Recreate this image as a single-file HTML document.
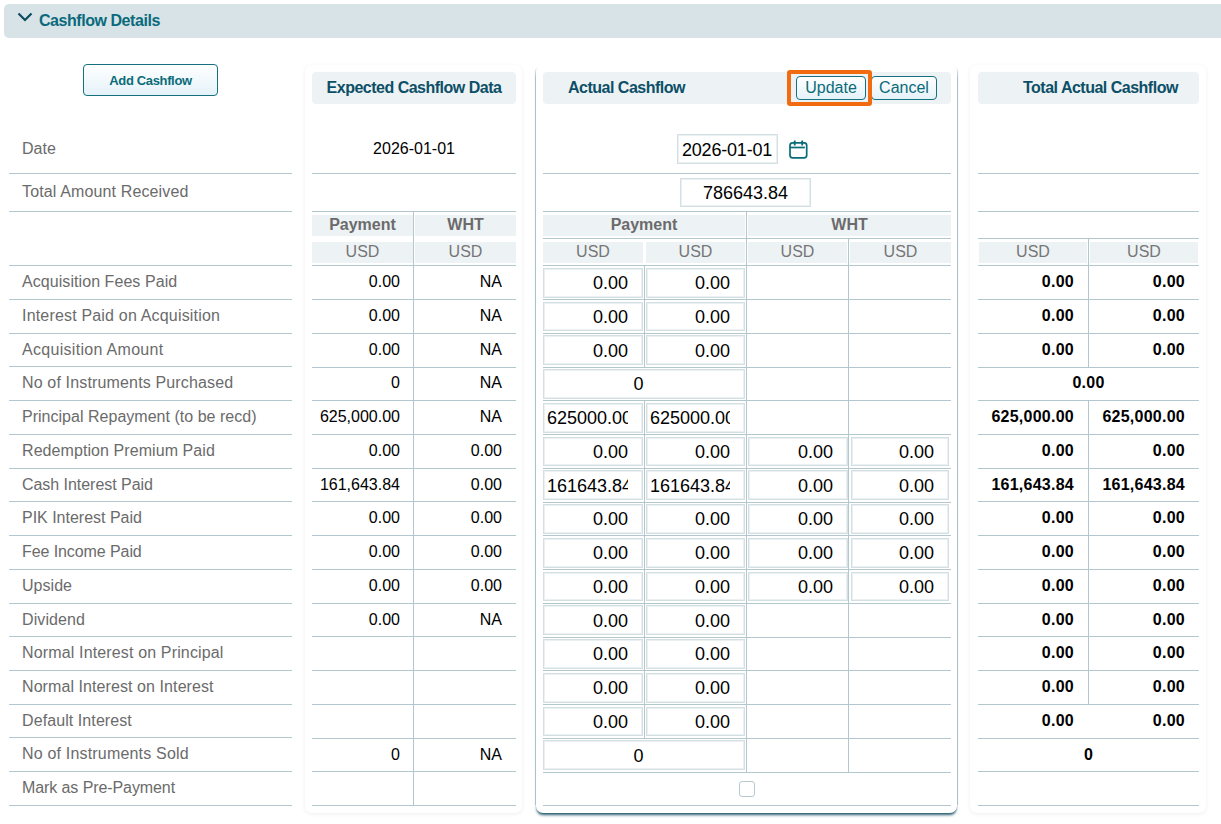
<!DOCTYPE html>
<html><head><meta charset="utf-8"><style>
html,body{margin:0;padding:0;background:#fff;width:1221px;height:824px;overflow:hidden}
#r{position:relative;width:1221px;height:824px;overflow:hidden}
#r div{position:absolute;box-sizing:border-box}
</style></head><body><div id="r">
<div style="left:4px;top:4px;width:1217px;height:34px;background:#d8e3e8;border-radius:5px 0 0 5px"></div>
<svg style="position:absolute;left:17px;top:12px" width="16" height="11" viewBox="0 0 16 11"><path d="M1.5 1.5 L8 8 L14.5 1.5" fill="none" stroke="#0b4d5e" stroke-width="2.2"/></svg>
<div style="left:39px;top:10px;width:200px;height:22px;font:bold 16px/22px 'Liberation Sans',sans-serif;color:#0a6a7b;letter-spacing:-0.45px;white-space:nowrap">Cashflow Details</div>
<div style="left:83px;top:64px;width:135px;height:32px;border:1px solid #16707e;border-radius:4px;background:linear-gradient(#ffffff,#e4f2f9);font:bold 13px/32px 'Liberation Sans',sans-serif;color:#0b6b79;text-align:center;letter-spacing:-0.35px;white-space:nowrap">Add Cashflow</div>
<div style="left:305px;top:65px;width:217px;height:748px;background:#fff;border-radius:7px;box-shadow:0 1px 4px rgba(0,0,0,0.07)"></div>
<div style="left:536px;top:64px;width:421px;height:749px;background:#fff;border-radius:7px;box-shadow:0 3px 3px -1px #2a5f72, 0 1px 1px 0 #a9bdc5"></div>
<div style="left:535px;top:68px;width:1px;height:737px;background:linear-gradient(rgba(169,191,200,0),#aec2ca 10px)"></div>
<div style="left:957px;top:68px;width:1px;height:737px;background:linear-gradient(rgba(169,191,200,0),#aec2ca 10px)"></div>
<div style="left:970px;top:65px;width:236px;height:748px;background:#fff;border-radius:7px;box-shadow:0 1px 4px rgba(0,0,0,0.07)"></div>
<div style="left:312px;top:72px;width:204px;height:32px;background:#edf2f5;border-radius:4px;font:bold 16px/32px 'Liberation Sans',sans-serif;color:#0c4f66;letter-spacing:-0.5px;white-space:nowrap;text-align:center">Expected Cashflow Data</div>
<div style="left:543px;top:72px;width:408px;height:32px;background:#edf2f5;border-radius:4px;font:bold 16px/32px 'Liberation Sans',sans-serif;color:#0c4f66;letter-spacing:-0.5px;white-space:nowrap"></div>
<div style="left:568px;top:72px;width:200px;height:32px;font:bold 16px/32px 'Liberation Sans',sans-serif;color:#0c4f66;letter-spacing:-0.5px;white-space:nowrap">Actual Cashflow</div>
<div style="left:978px;top:72px;width:221px;height:32px;background:#edf2f5;border-radius:4px"></div>
<div style="left:1023px;top:72px;width:175px;height:32px;font:bold 16px/32px 'Liberation Sans',sans-serif;color:#0c4f66;letter-spacing:-0.5px;white-space:nowrap">Total Actual Cashflow</div>
<div style="left:871px;top:76px;width:66px;height:24px;border:1px solid #16707e;border-radius:4px;background:linear-gradient(#ffffff,#e4f2f9);font:16px/22px 'Liberation Sans',sans-serif;color:#0b6b79;text-align:center;white-space:nowrap">Cancel</div>
<div style="left:787px;top:70px;width:85px;height:36px;border:4px solid #f26b10;border-radius:3px"></div>
<div style="left:796px;top:76px;width:70px;height:24px;border:1px solid #16707e;border-radius:4px;background:linear-gradient(#ffffff,#e4f2f9);font:16px/22px 'Liberation Sans',sans-serif;color:#0b6b79;text-align:center;white-space:nowrap">Update</div>
<div style="left:22px;top:139px;width:270px;height:20px;font:16px/20px 'Liberation Sans',sans-serif;color:#6b6b6b;white-space:nowrap;letter-spacing:0px">Date</div>
<div style="left:9px;top:173px;width:283px;height:1px;background:#b3c7cf"></div>
<div style="left:22px;top:182px;width:270px;height:20px;font:16px/20px 'Liberation Sans',sans-serif;color:#6b6b6b;white-space:nowrap;letter-spacing:0.135px">Total Amount Received</div>
<div style="left:9px;top:211px;width:283px;height:1px;background:#b3c7cf"></div>
<div style="left:9px;top:265px;width:283px;height:1px;background:#b3c7cf"></div>
<div style="left:22px;top:272px;width:270px;height:20px;font:16px/20px 'Liberation Sans',sans-serif;color:#6b6b6b;white-space:nowrap;letter-spacing:0.065px">Acquisition Fees Paid</div>
<div style="left:9px;top:299px;width:283px;height:1px;background:#b3c7cf"></div>
<div style="left:22px;top:306px;width:270px;height:20px;font:16px/20px 'Liberation Sans',sans-serif;color:#6b6b6b;white-space:nowrap;letter-spacing:0.181px">Interest Paid on Acquisition</div>
<div style="left:9px;top:333px;width:283px;height:1px;background:#b3c7cf"></div>
<div style="left:22px;top:340px;width:270px;height:20px;font:16px/20px 'Liberation Sans',sans-serif;color:#6b6b6b;white-space:nowrap;letter-spacing:0.3px">Acquisition Amount</div>
<div style="left:9px;top:366px;width:283px;height:1px;background:#b3c7cf"></div>
<div style="left:22px;top:373px;width:270px;height:20px;font:16px/20px 'Liberation Sans',sans-serif;color:#6b6b6b;white-space:nowrap;letter-spacing:0.154px">No of Instruments Purchased</div>
<div style="left:9px;top:400px;width:283px;height:1px;background:#b3c7cf"></div>
<div style="left:22px;top:407px;width:270px;height:20px;font:16px/20px 'Liberation Sans',sans-serif;color:#6b6b6b;white-space:nowrap;letter-spacing:0.019px">Principal Repayment (to be recd)</div>
<div style="left:9px;top:434px;width:283px;height:1px;background:#b3c7cf"></div>
<div style="left:22px;top:441px;width:270px;height:20px;font:16px/20px 'Liberation Sans',sans-serif;color:#6b6b6b;white-space:nowrap;letter-spacing:0.073px">Redemption Premium Paid</div>
<div style="left:9px;top:468px;width:283px;height:1px;background:#b3c7cf"></div>
<div style="left:22px;top:475px;width:270px;height:20px;font:16px/20px 'Liberation Sans',sans-serif;color:#6b6b6b;white-space:nowrap;letter-spacing:-0.041px">Cash Interest Paid</div>
<div style="left:9px;top:501px;width:283px;height:1px;background:#b3c7cf"></div>
<div style="left:22px;top:508px;width:270px;height:20px;font:16px/20px 'Liberation Sans',sans-serif;color:#6b6b6b;white-space:nowrap;letter-spacing:-0.012px">PIK Interest Paid</div>
<div style="left:9px;top:535px;width:283px;height:1px;background:#b3c7cf"></div>
<div style="left:22px;top:542px;width:270px;height:20px;font:16px/20px 'Liberation Sans',sans-serif;color:#6b6b6b;white-space:nowrap;letter-spacing:-0.086px">Fee Income Paid</div>
<div style="left:9px;top:569px;width:283px;height:1px;background:#b3c7cf"></div>
<div style="left:22px;top:576px;width:270px;height:20px;font:16px/20px 'Liberation Sans',sans-serif;color:#6b6b6b;white-space:nowrap;letter-spacing:0.04px">Upside</div>
<div style="left:9px;top:603px;width:283px;height:1px;background:#b3c7cf"></div>
<div style="left:22px;top:610px;width:270px;height:20px;font:16px/20px 'Liberation Sans',sans-serif;color:#6b6b6b;white-space:nowrap;letter-spacing:0.1px">Dividend</div>
<div style="left:9px;top:636px;width:283px;height:1px;background:#b3c7cf"></div>
<div style="left:22px;top:643px;width:270px;height:20px;font:16px/20px 'Liberation Sans',sans-serif;color:#6b6b6b;white-space:nowrap;letter-spacing:0.148px">Normal Interest on Principal</div>
<div style="left:9px;top:670px;width:283px;height:1px;background:#b3c7cf"></div>
<div style="left:22px;top:677px;width:270px;height:20px;font:16px/20px 'Liberation Sans',sans-serif;color:#6b6b6b;white-space:nowrap;letter-spacing:0.081px">Normal Interest on Interest</div>
<div style="left:9px;top:704px;width:283px;height:1px;background:#b3c7cf"></div>
<div style="left:22px;top:711px;width:270px;height:20px;font:16px/20px 'Liberation Sans',sans-serif;color:#6b6b6b;white-space:nowrap;letter-spacing:0.087px">Default Interest</div>
<div style="left:9px;top:737px;width:283px;height:1px;background:#b3c7cf"></div>
<div style="left:22px;top:744px;width:270px;height:20px;font:16px/20px 'Liberation Sans',sans-serif;color:#6b6b6b;white-space:nowrap;letter-spacing:0.186px">No of Instruments Sold</div>
<div style="left:9px;top:771px;width:283px;height:1px;background:#b3c7cf"></div>
<div style="left:22px;top:778px;width:270px;height:20px;font:16px/20px 'Liberation Sans',sans-serif;color:#6b6b6b;white-space:nowrap;letter-spacing:-0.089px">Mark as Pre-Payment</div>
<div style="left:9px;top:805px;width:283px;height:1px;background:#b3c7cf"></div>
<div style="left:312px;top:139px;width:204px;height:20px;font:16px/20px 'Liberation Sans',sans-serif;color:#000;white-space:nowrap;text-align:center">2026-01-01</div>
<div style="left:312px;top:173px;width:204px;height:1px;background:#b3c7cf"></div>
<div style="left:312px;top:211px;width:204px;height:1px;background:#b3c7cf"></div>
<div style="left:312px;top:265px;width:204px;height:1px;background:#b3c7cf"></div>
<div style="left:413px;top:211px;width:1px;height:595px;background:#b3c7cf"></div>
<div style="left:312px;top:215px;width:101px;height:21px;background:#edf2f5;font:bold 16px/19px 'Liberation Sans',sans-serif;color:#6b6b6b;text-align:center;white-space:nowrap">Payment</div>
<div style="left:415px;top:215px;width:101px;height:21px;background:#edf2f5;font:bold 16px/19px 'Liberation Sans',sans-serif;color:#6b6b6b;text-align:center;white-space:nowrap">WHT</div>
<div style="left:312px;top:242px;width:101px;height:21px;background:#edf2f5;font:16px/19px 'Liberation Sans',sans-serif;color:#767676;text-align:center;white-space:nowrap">USD</div>
<div style="left:415px;top:242px;width:101px;height:21px;background:#edf2f5;font:16px/19px 'Liberation Sans',sans-serif;color:#767676;text-align:center;white-space:nowrap">USD</div>
<div style="left:313px;top:272px;width:87px;height:20px;font:16px/20px 'Liberation Sans',sans-serif;color:#000;white-space:nowrap;text-align:right">0.00</div>
<div style="left:414px;top:272px;width:88px;height:20px;font:16px/20px 'Liberation Sans',sans-serif;color:#000;white-space:nowrap;text-align:right">NA</div>
<div style="left:312px;top:299px;width:204px;height:1px;background:#b3c7cf"></div>
<div style="left:313px;top:306px;width:87px;height:20px;font:16px/20px 'Liberation Sans',sans-serif;color:#000;white-space:nowrap;text-align:right">0.00</div>
<div style="left:414px;top:306px;width:88px;height:20px;font:16px/20px 'Liberation Sans',sans-serif;color:#000;white-space:nowrap;text-align:right">NA</div>
<div style="left:312px;top:333px;width:204px;height:1px;background:#b3c7cf"></div>
<div style="left:313px;top:340px;width:87px;height:20px;font:16px/20px 'Liberation Sans',sans-serif;color:#000;white-space:nowrap;text-align:right">0.00</div>
<div style="left:414px;top:340px;width:88px;height:20px;font:16px/20px 'Liberation Sans',sans-serif;color:#000;white-space:nowrap;text-align:right">NA</div>
<div style="left:312px;top:367px;width:204px;height:1px;background:#b3c7cf"></div>
<div style="left:313px;top:373px;width:87px;height:20px;font:16px/20px 'Liberation Sans',sans-serif;color:#000;white-space:nowrap;text-align:right">0</div>
<div style="left:414px;top:373px;width:88px;height:20px;font:16px/20px 'Liberation Sans',sans-serif;color:#000;white-space:nowrap;text-align:right">NA</div>
<div style="left:312px;top:400px;width:204px;height:1px;background:#b3c7cf"></div>
<div style="left:313px;top:407px;width:87px;height:20px;font:16px/20px 'Liberation Sans',sans-serif;color:#000;white-space:nowrap;text-align:right">625,000.00</div>
<div style="left:414px;top:407px;width:88px;height:20px;font:16px/20px 'Liberation Sans',sans-serif;color:#000;white-space:nowrap;text-align:right">NA</div>
<div style="left:312px;top:434px;width:204px;height:1px;background:#b3c7cf"></div>
<div style="left:313px;top:441px;width:87px;height:20px;font:16px/20px 'Liberation Sans',sans-serif;color:#000;white-space:nowrap;text-align:right">0.00</div>
<div style="left:414px;top:441px;width:88px;height:20px;font:16px/20px 'Liberation Sans',sans-serif;color:#000;white-space:nowrap;text-align:right">0.00</div>
<div style="left:312px;top:468px;width:204px;height:1px;background:#b3c7cf"></div>
<div style="left:313px;top:475px;width:87px;height:20px;font:16px/20px 'Liberation Sans',sans-serif;color:#000;white-space:nowrap;text-align:right">161,643.84</div>
<div style="left:414px;top:475px;width:88px;height:20px;font:16px/20px 'Liberation Sans',sans-serif;color:#000;white-space:nowrap;text-align:right">0.00</div>
<div style="left:312px;top:501px;width:204px;height:1px;background:#b3c7cf"></div>
<div style="left:313px;top:508px;width:87px;height:20px;font:16px/20px 'Liberation Sans',sans-serif;color:#000;white-space:nowrap;text-align:right">0.00</div>
<div style="left:414px;top:508px;width:88px;height:20px;font:16px/20px 'Liberation Sans',sans-serif;color:#000;white-space:nowrap;text-align:right">0.00</div>
<div style="left:312px;top:535px;width:204px;height:1px;background:#b3c7cf"></div>
<div style="left:313px;top:542px;width:87px;height:20px;font:16px/20px 'Liberation Sans',sans-serif;color:#000;white-space:nowrap;text-align:right">0.00</div>
<div style="left:414px;top:542px;width:88px;height:20px;font:16px/20px 'Liberation Sans',sans-serif;color:#000;white-space:nowrap;text-align:right">0.00</div>
<div style="left:312px;top:569px;width:204px;height:1px;background:#b3c7cf"></div>
<div style="left:313px;top:576px;width:87px;height:20px;font:16px/20px 'Liberation Sans',sans-serif;color:#000;white-space:nowrap;text-align:right">0.00</div>
<div style="left:414px;top:576px;width:88px;height:20px;font:16px/20px 'Liberation Sans',sans-serif;color:#000;white-space:nowrap;text-align:right">0.00</div>
<div style="left:312px;top:603px;width:204px;height:1px;background:#b3c7cf"></div>
<div style="left:313px;top:610px;width:87px;height:20px;font:16px/20px 'Liberation Sans',sans-serif;color:#000;white-space:nowrap;text-align:right">0.00</div>
<div style="left:414px;top:610px;width:88px;height:20px;font:16px/20px 'Liberation Sans',sans-serif;color:#000;white-space:nowrap;text-align:right">NA</div>
<div style="left:312px;top:636px;width:204px;height:1px;background:#b3c7cf"></div>
<div style="left:312px;top:670px;width:204px;height:1px;background:#b3c7cf"></div>
<div style="left:312px;top:704px;width:204px;height:1px;background:#b3c7cf"></div>
<div style="left:312px;top:738px;width:204px;height:1px;background:#b3c7cf"></div>
<div style="left:313px;top:745px;width:87px;height:20px;font:16px/20px 'Liberation Sans',sans-serif;color:#000;white-space:nowrap;text-align:right">0</div>
<div style="left:414px;top:745px;width:88px;height:20px;font:16px/20px 'Liberation Sans',sans-serif;color:#000;white-space:nowrap;text-align:right">NA</div>
<div style="left:312px;top:771px;width:204px;height:1px;background:#b3c7cf"></div>
<div style="left:312px;top:805px;width:204px;height:1px;background:#b3c7cf"></div>
<div style="left:677px;top:134px;width:101px;height:30px;border:1px solid #d3dfe3;box-shadow:inset 0 0 0 1px #ebf1f3;background:#fff"></div>
<div style="left:682px;top:140px;width:95px;height:20px;font:18px/20px 'Liberation Sans',sans-serif;color:#000;white-space:nowrap;letter-spacing:-0.2px;overflow:hidden;text-align:left">2026-01-01</div>
<svg style="position:absolute;left:789px;top:140px" width="19" height="19" viewBox="0 0 19 19"><rect x="1" y="2.9" width="16.7" height="14.9" rx="2.6" fill="none" stroke="#086b78" stroke-width="1.7"/><line x1="1" y1="7.5" x2="15.9" y2="7.5" stroke="#086b78" stroke-width="1.7"/><line x1="5.7" y1="0.5" x2="5.7" y2="5.5" stroke="#086b78" stroke-width="1.8"/><line x1="13.2" y1="0.5" x2="13.2" y2="5.5" stroke="#086b78" stroke-width="1.8"/></svg>
<div style="left:543px;top:173px;width:408px;height:1px;background:#b3c7cf"></div>
<div style="left:680px;top:178px;width:131px;height:29px;border:1px solid #d3dfe3;box-shadow:inset 0 0 0 1px #ebf1f3;background:#fff"></div>
<div style="left:681px;top:183px;width:129px;height:20px;font:18px/20px 'Liberation Sans',sans-serif;color:#000;white-space:nowrap;overflow:hidden;text-align:center">786643.84</div>
<div style="left:543px;top:211px;width:408px;height:1px;background:#b3c7cf"></div>
<div style="left:543px;top:238px;width:408px;height:1px;background:#b3c7cf"></div>
<div style="left:543px;top:265px;width:408px;height:1px;background:#b3c7cf"></div>
<div style="left:746px;top:211px;width:1px;height:562px;background:#b3c7cf"></div>
<div style="left:848px;top:238px;width:1px;height:535px;background:#b3c7cf"></div>
<div style="left:543px;top:215px;width:202px;height:21px;background:#edf2f5;font:bold 16px/19px 'Liberation Sans',sans-serif;color:#6b6b6b;text-align:center;white-space:nowrap">Payment</div>
<div style="left:748px;top:215px;width:203px;height:21px;background:#edf2f5;font:bold 16px/19px 'Liberation Sans',sans-serif;color:#6b6b6b;text-align:center;white-space:nowrap">WHT</div>
<div style="left:543px;top:242px;width:100px;height:21px;background:#edf2f5;font:16px/19px 'Liberation Sans',sans-serif;color:#767676;text-align:center;white-space:nowrap">USD</div>
<div style="left:646px;top:242px;width:99px;height:21px;background:#edf2f5;font:16px/19px 'Liberation Sans',sans-serif;color:#767676;text-align:center;white-space:nowrap">USD</div>
<div style="left:748px;top:242px;width:99px;height:21px;background:#edf2f5;font:16px/19px 'Liberation Sans',sans-serif;color:#767676;text-align:center;white-space:nowrap">USD</div>
<div style="left:850px;top:242px;width:101px;height:21px;background:#edf2f5;font:16px/19px 'Liberation Sans',sans-serif;color:#767676;text-align:center;white-space:nowrap">USD</div>
<div style="left:644px;top:265px;width:1px;height:35px;background:#b3c7cf"></div>
<div style="left:543px;top:268px;width:100px;height:30px;border:1px solid #d3dfe3;box-shadow:inset 0 0 0 1px #ebf1f3;background:#fff"></div>
<div style="left:547px;top:273px;width:81px;height:20px;font:18px/20px 'Liberation Sans',sans-serif;color:#000;white-space:nowrap;overflow:hidden;text-align:right">0.00</div>
<div style="left:646px;top:268px;width:99px;height:30px;border:1px solid #d3dfe3;box-shadow:inset 0 0 0 1px #ebf1f3;background:#fff"></div>
<div style="left:650px;top:273px;width:80px;height:20px;font:18px/20px 'Liberation Sans',sans-serif;color:#000;white-space:nowrap;overflow:hidden;text-align:right">0.00</div>
<div style="left:543px;top:299px;width:408px;height:1px;background:#b3c7cf"></div>
<div style="left:644px;top:299px;width:1px;height:35px;background:#b3c7cf"></div>
<div style="left:543px;top:302px;width:100px;height:29px;border:1px solid #d3dfe3;box-shadow:inset 0 0 0 1px #ebf1f3;background:#fff"></div>
<div style="left:547px;top:307px;width:81px;height:20px;font:18px/20px 'Liberation Sans',sans-serif;color:#000;white-space:nowrap;overflow:hidden;text-align:right">0.00</div>
<div style="left:646px;top:302px;width:99px;height:29px;border:1px solid #d3dfe3;box-shadow:inset 0 0 0 1px #ebf1f3;background:#fff"></div>
<div style="left:650px;top:307px;width:80px;height:20px;font:18px/20px 'Liberation Sans',sans-serif;color:#000;white-space:nowrap;overflow:hidden;text-align:right">0.00</div>
<div style="left:543px;top:333px;width:408px;height:1px;background:#b3c7cf"></div>
<div style="left:644px;top:333px;width:1px;height:35px;background:#b3c7cf"></div>
<div style="left:543px;top:335px;width:100px;height:30px;border:1px solid #d3dfe3;box-shadow:inset 0 0 0 1px #ebf1f3;background:#fff"></div>
<div style="left:547px;top:341px;width:81px;height:20px;font:18px/20px 'Liberation Sans',sans-serif;color:#000;white-space:nowrap;overflow:hidden;text-align:right">0.00</div>
<div style="left:646px;top:335px;width:99px;height:30px;border:1px solid #d3dfe3;box-shadow:inset 0 0 0 1px #ebf1f3;background:#fff"></div>
<div style="left:650px;top:341px;width:80px;height:20px;font:18px/20px 'Liberation Sans',sans-serif;color:#000;white-space:nowrap;overflow:hidden;text-align:right">0.00</div>
<div style="left:543px;top:367px;width:408px;height:1px;background:#b3c7cf"></div>
<div style="left:543px;top:369px;width:202px;height:30px;border:1px solid #d3dfe3;box-shadow:inset 0 0 0 1px #ebf1f3;background:#fff"></div>
<div style="left:547px;top:374px;width:183px;height:20px;font:18px/20px 'Liberation Sans',sans-serif;color:#000;white-space:nowrap;overflow:hidden;text-align:center">0</div>
<div style="left:543px;top:400px;width:408px;height:1px;background:#b3c7cf"></div>
<div style="left:644px;top:400px;width:1px;height:35px;background:#b3c7cf"></div>
<div style="left:543px;top:403px;width:100px;height:30px;border:1px solid #d3dfe3;box-shadow:inset 0 0 0 1px #ebf1f3;background:#fff"></div>
<div style="left:547px;top:408px;width:81px;height:20px;font:18px/20px 'Liberation Sans',sans-serif;color:#000;white-space:nowrap;overflow:hidden;text-align:right">625000.00</div>
<div style="left:646px;top:403px;width:99px;height:30px;border:1px solid #d3dfe3;box-shadow:inset 0 0 0 1px #ebf1f3;background:#fff"></div>
<div style="left:650px;top:408px;width:80px;height:20px;font:18px/20px 'Liberation Sans',sans-serif;color:#000;white-space:nowrap;overflow:hidden;text-align:right">625000.00</div>
<div style="left:543px;top:434px;width:408px;height:1px;background:#b3c7cf"></div>
<div style="left:644px;top:434px;width:1px;height:35px;background:#b3c7cf"></div>
<div style="left:543px;top:437px;width:100px;height:29px;border:1px solid #d3dfe3;box-shadow:inset 0 0 0 1px #ebf1f3;background:#fff"></div>
<div style="left:547px;top:442px;width:81px;height:20px;font:18px/20px 'Liberation Sans',sans-serif;color:#000;white-space:nowrap;overflow:hidden;text-align:right">0.00</div>
<div style="left:646px;top:437px;width:99px;height:29px;border:1px solid #d3dfe3;box-shadow:inset 0 0 0 1px #ebf1f3;background:#fff"></div>
<div style="left:650px;top:442px;width:80px;height:20px;font:18px/20px 'Liberation Sans',sans-serif;color:#000;white-space:nowrap;overflow:hidden;text-align:right">0.00</div>
<div style="left:748px;top:437px;width:100px;height:29px;border:1px solid #d3dfe3;box-shadow:inset 0 0 0 1px #ebf1f3;background:#fff"></div>
<div style="left:752px;top:442px;width:81px;height:20px;font:18px/20px 'Liberation Sans',sans-serif;color:#000;white-space:nowrap;overflow:hidden;text-align:right">0.00</div>
<div style="left:851px;top:437px;width:98px;height:29px;border:1px solid #d3dfe3;box-shadow:inset 0 0 0 1px #ebf1f3;background:#fff"></div>
<div style="left:855px;top:442px;width:79px;height:20px;font:18px/20px 'Liberation Sans',sans-serif;color:#000;white-space:nowrap;overflow:hidden;text-align:right">0.00</div>
<div style="left:543px;top:468px;width:408px;height:1px;background:#b3c7cf"></div>
<div style="left:644px;top:468px;width:1px;height:35px;background:#b3c7cf"></div>
<div style="left:543px;top:470px;width:100px;height:30px;border:1px solid #d3dfe3;box-shadow:inset 0 0 0 1px #ebf1f3;background:#fff"></div>
<div style="left:547px;top:476px;width:81px;height:20px;font:18px/20px 'Liberation Sans',sans-serif;color:#000;white-space:nowrap;overflow:hidden;text-align:right">161643.84</div>
<div style="left:646px;top:470px;width:99px;height:30px;border:1px solid #d3dfe3;box-shadow:inset 0 0 0 1px #ebf1f3;background:#fff"></div>
<div style="left:650px;top:476px;width:80px;height:20px;font:18px/20px 'Liberation Sans',sans-serif;color:#000;white-space:nowrap;overflow:hidden;text-align:right">161643.84</div>
<div style="left:748px;top:470px;width:100px;height:30px;border:1px solid #d3dfe3;box-shadow:inset 0 0 0 1px #ebf1f3;background:#fff"></div>
<div style="left:752px;top:476px;width:81px;height:20px;font:18px/20px 'Liberation Sans',sans-serif;color:#000;white-space:nowrap;overflow:hidden;text-align:right">0.00</div>
<div style="left:851px;top:470px;width:98px;height:30px;border:1px solid #d3dfe3;box-shadow:inset 0 0 0 1px #ebf1f3;background:#fff"></div>
<div style="left:855px;top:476px;width:79px;height:20px;font:18px/20px 'Liberation Sans',sans-serif;color:#000;white-space:nowrap;overflow:hidden;text-align:right">0.00</div>
<div style="left:543px;top:502px;width:408px;height:1px;background:#b3c7cf"></div>
<div style="left:644px;top:502px;width:1px;height:34px;background:#b3c7cf"></div>
<div style="left:543px;top:504px;width:100px;height:30px;border:1px solid #d3dfe3;box-shadow:inset 0 0 0 1px #ebf1f3;background:#fff"></div>
<div style="left:547px;top:509px;width:81px;height:20px;font:18px/20px 'Liberation Sans',sans-serif;color:#000;white-space:nowrap;overflow:hidden;text-align:right">0.00</div>
<div style="left:646px;top:504px;width:99px;height:30px;border:1px solid #d3dfe3;box-shadow:inset 0 0 0 1px #ebf1f3;background:#fff"></div>
<div style="left:650px;top:509px;width:80px;height:20px;font:18px/20px 'Liberation Sans',sans-serif;color:#000;white-space:nowrap;overflow:hidden;text-align:right">0.00</div>
<div style="left:748px;top:504px;width:100px;height:30px;border:1px solid #d3dfe3;box-shadow:inset 0 0 0 1px #ebf1f3;background:#fff"></div>
<div style="left:752px;top:509px;width:81px;height:20px;font:18px/20px 'Liberation Sans',sans-serif;color:#000;white-space:nowrap;overflow:hidden;text-align:right">0.00</div>
<div style="left:851px;top:504px;width:98px;height:30px;border:1px solid #d3dfe3;box-shadow:inset 0 0 0 1px #ebf1f3;background:#fff"></div>
<div style="left:855px;top:509px;width:79px;height:20px;font:18px/20px 'Liberation Sans',sans-serif;color:#000;white-space:nowrap;overflow:hidden;text-align:right">0.00</div>
<div style="left:543px;top:535px;width:408px;height:1px;background:#b3c7cf"></div>
<div style="left:644px;top:535px;width:1px;height:35px;background:#b3c7cf"></div>
<div style="left:543px;top:538px;width:100px;height:30px;border:1px solid #d3dfe3;box-shadow:inset 0 0 0 1px #ebf1f3;background:#fff"></div>
<div style="left:547px;top:543px;width:81px;height:20px;font:18px/20px 'Liberation Sans',sans-serif;color:#000;white-space:nowrap;overflow:hidden;text-align:right">0.00</div>
<div style="left:646px;top:538px;width:99px;height:30px;border:1px solid #d3dfe3;box-shadow:inset 0 0 0 1px #ebf1f3;background:#fff"></div>
<div style="left:650px;top:543px;width:80px;height:20px;font:18px/20px 'Liberation Sans',sans-serif;color:#000;white-space:nowrap;overflow:hidden;text-align:right">0.00</div>
<div style="left:748px;top:538px;width:100px;height:30px;border:1px solid #d3dfe3;box-shadow:inset 0 0 0 1px #ebf1f3;background:#fff"></div>
<div style="left:752px;top:543px;width:81px;height:20px;font:18px/20px 'Liberation Sans',sans-serif;color:#000;white-space:nowrap;overflow:hidden;text-align:right">0.00</div>
<div style="left:851px;top:538px;width:98px;height:30px;border:1px solid #d3dfe3;box-shadow:inset 0 0 0 1px #ebf1f3;background:#fff"></div>
<div style="left:855px;top:543px;width:79px;height:20px;font:18px/20px 'Liberation Sans',sans-serif;color:#000;white-space:nowrap;overflow:hidden;text-align:right">0.00</div>
<div style="left:543px;top:569px;width:408px;height:1px;background:#b3c7cf"></div>
<div style="left:644px;top:569px;width:1px;height:35px;background:#b3c7cf"></div>
<div style="left:543px;top:572px;width:100px;height:29px;border:1px solid #d3dfe3;box-shadow:inset 0 0 0 1px #ebf1f3;background:#fff"></div>
<div style="left:547px;top:577px;width:81px;height:20px;font:18px/20px 'Liberation Sans',sans-serif;color:#000;white-space:nowrap;overflow:hidden;text-align:right">0.00</div>
<div style="left:646px;top:572px;width:99px;height:29px;border:1px solid #d3dfe3;box-shadow:inset 0 0 0 1px #ebf1f3;background:#fff"></div>
<div style="left:650px;top:577px;width:80px;height:20px;font:18px/20px 'Liberation Sans',sans-serif;color:#000;white-space:nowrap;overflow:hidden;text-align:right">0.00</div>
<div style="left:748px;top:572px;width:100px;height:29px;border:1px solid #d3dfe3;box-shadow:inset 0 0 0 1px #ebf1f3;background:#fff"></div>
<div style="left:752px;top:577px;width:81px;height:20px;font:18px/20px 'Liberation Sans',sans-serif;color:#000;white-space:nowrap;overflow:hidden;text-align:right">0.00</div>
<div style="left:851px;top:572px;width:98px;height:29px;border:1px solid #d3dfe3;box-shadow:inset 0 0 0 1px #ebf1f3;background:#fff"></div>
<div style="left:855px;top:577px;width:79px;height:20px;font:18px/20px 'Liberation Sans',sans-serif;color:#000;white-space:nowrap;overflow:hidden;text-align:right">0.00</div>
<div style="left:543px;top:603px;width:408px;height:1px;background:#b3c7cf"></div>
<div style="left:644px;top:603px;width:1px;height:35px;background:#b3c7cf"></div>
<div style="left:543px;top:605px;width:100px;height:30px;border:1px solid #d3dfe3;box-shadow:inset 0 0 0 1px #ebf1f3;background:#fff"></div>
<div style="left:547px;top:611px;width:81px;height:20px;font:18px/20px 'Liberation Sans',sans-serif;color:#000;white-space:nowrap;overflow:hidden;text-align:right">0.00</div>
<div style="left:646px;top:605px;width:99px;height:30px;border:1px solid #d3dfe3;box-shadow:inset 0 0 0 1px #ebf1f3;background:#fff"></div>
<div style="left:650px;top:611px;width:80px;height:20px;font:18px/20px 'Liberation Sans',sans-serif;color:#000;white-space:nowrap;overflow:hidden;text-align:right">0.00</div>
<div style="left:543px;top:637px;width:408px;height:1px;background:#b3c7cf"></div>
<div style="left:644px;top:637px;width:1px;height:34px;background:#b3c7cf"></div>
<div style="left:543px;top:639px;width:100px;height:30px;border:1px solid #d3dfe3;box-shadow:inset 0 0 0 1px #ebf1f3;background:#fff"></div>
<div style="left:547px;top:644px;width:81px;height:20px;font:18px/20px 'Liberation Sans',sans-serif;color:#000;white-space:nowrap;overflow:hidden;text-align:right">0.00</div>
<div style="left:646px;top:639px;width:99px;height:30px;border:1px solid #d3dfe3;box-shadow:inset 0 0 0 1px #ebf1f3;background:#fff"></div>
<div style="left:650px;top:644px;width:80px;height:20px;font:18px/20px 'Liberation Sans',sans-serif;color:#000;white-space:nowrap;overflow:hidden;text-align:right">0.00</div>
<div style="left:543px;top:670px;width:408px;height:1px;background:#b3c7cf"></div>
<div style="left:644px;top:670px;width:1px;height:35px;background:#b3c7cf"></div>
<div style="left:543px;top:673px;width:100px;height:30px;border:1px solid #d3dfe3;box-shadow:inset 0 0 0 1px #ebf1f3;background:#fff"></div>
<div style="left:547px;top:678px;width:81px;height:20px;font:18px/20px 'Liberation Sans',sans-serif;color:#000;white-space:nowrap;overflow:hidden;text-align:right">0.00</div>
<div style="left:646px;top:673px;width:99px;height:30px;border:1px solid #d3dfe3;box-shadow:inset 0 0 0 1px #ebf1f3;background:#fff"></div>
<div style="left:650px;top:678px;width:80px;height:20px;font:18px/20px 'Liberation Sans',sans-serif;color:#000;white-space:nowrap;overflow:hidden;text-align:right">0.00</div>
<div style="left:543px;top:704px;width:408px;height:1px;background:#b3c7cf"></div>
<div style="left:644px;top:704px;width:1px;height:35px;background:#b3c7cf"></div>
<div style="left:543px;top:707px;width:100px;height:29px;border:1px solid #d3dfe3;box-shadow:inset 0 0 0 1px #ebf1f3;background:#fff"></div>
<div style="left:547px;top:712px;width:81px;height:20px;font:18px/20px 'Liberation Sans',sans-serif;color:#000;white-space:nowrap;overflow:hidden;text-align:right">0.00</div>
<div style="left:646px;top:707px;width:99px;height:29px;border:1px solid #d3dfe3;box-shadow:inset 0 0 0 1px #ebf1f3;background:#fff"></div>
<div style="left:650px;top:712px;width:80px;height:20px;font:18px/20px 'Liberation Sans',sans-serif;color:#000;white-space:nowrap;overflow:hidden;text-align:right">0.00</div>
<div style="left:543px;top:738px;width:408px;height:1px;background:#b3c7cf"></div>
<div style="left:543px;top:740px;width:202px;height:30px;border:1px solid #d3dfe3;box-shadow:inset 0 0 0 1px #ebf1f3;background:#fff"></div>
<div style="left:547px;top:746px;width:183px;height:20px;font:18px/20px 'Liberation Sans',sans-serif;color:#000;white-space:nowrap;overflow:hidden;text-align:center">0</div>
<div style="left:543px;top:772px;width:408px;height:1px;background:#b3c7cf"></div>
<div style="left:739px;top:781px;width:16px;height:16px;border:1px solid #b5c9d0;border-radius:3px;background:#fff"></div>
<div style="left:543px;top:805px;width:408px;height:1px;background:#b3c7cf"></div>
<div style="left:978px;top:173px;width:221px;height:1px;background:#b3c7cf"></div>
<div style="left:978px;top:211px;width:221px;height:1px;background:#b3c7cf"></div>
<div style="left:978px;top:238px;width:221px;height:1px;background:#b3c7cf"></div>
<div style="left:978px;top:265px;width:221px;height:1px;background:#b3c7cf"></div>
<div style="left:1088px;top:238px;width:1px;height:28px;background:#b3c7cf"></div>
<div style="left:979px;top:242px;width:108px;height:21px;background:#edf2f5;font:16px/19px 'Liberation Sans',sans-serif;color:#767676;text-align:center;white-space:nowrap">USD</div>
<div style="left:1090px;top:242px;width:108px;height:21px;background:#edf2f5;font:16px/19px 'Liberation Sans',sans-serif;color:#767676;text-align:center;white-space:nowrap">USD</div>
<div style="left:1088px;top:265px;width:1px;height:35px;background:#b3c7cf"></div>
<div style="left:978px;top:272px;width:96px;height:20px;font:bold 16px/20px 'Liberation Sans',sans-serif;color:#000;white-space:nowrap;letter-spacing:0.25px;text-align:right">0.00</div>
<div style="left:1089px;top:272px;width:96px;height:20px;font:bold 16px/20px 'Liberation Sans',sans-serif;color:#000;white-space:nowrap;letter-spacing:0.25px;text-align:right">0.00</div>
<div style="left:978px;top:299px;width:221px;height:1px;background:#b3c7cf"></div>
<div style="left:1088px;top:299px;width:1px;height:35px;background:#b3c7cf"></div>
<div style="left:978px;top:306px;width:96px;height:20px;font:bold 16px/20px 'Liberation Sans',sans-serif;color:#000;white-space:nowrap;letter-spacing:0.25px;text-align:right">0.00</div>
<div style="left:1089px;top:306px;width:96px;height:20px;font:bold 16px/20px 'Liberation Sans',sans-serif;color:#000;white-space:nowrap;letter-spacing:0.25px;text-align:right">0.00</div>
<div style="left:978px;top:333px;width:221px;height:1px;background:#b3c7cf"></div>
<div style="left:1088px;top:333px;width:1px;height:35px;background:#b3c7cf"></div>
<div style="left:978px;top:340px;width:96px;height:20px;font:bold 16px/20px 'Liberation Sans',sans-serif;color:#000;white-space:nowrap;letter-spacing:0.25px;text-align:right">0.00</div>
<div style="left:1089px;top:340px;width:96px;height:20px;font:bold 16px/20px 'Liberation Sans',sans-serif;color:#000;white-space:nowrap;letter-spacing:0.25px;text-align:right">0.00</div>
<div style="left:978px;top:367px;width:221px;height:1px;background:#b3c7cf"></div>
<div style="left:978px;top:373px;width:221px;height:20px;font:bold 16px/20px 'Liberation Sans',sans-serif;color:#000;white-space:nowrap;letter-spacing:0.25px;text-align:center">0.00</div>
<div style="left:978px;top:400px;width:221px;height:1px;background:#b3c7cf"></div>
<div style="left:1088px;top:400px;width:1px;height:35px;background:#b3c7cf"></div>
<div style="left:978px;top:407px;width:96px;height:20px;font:bold 16px/20px 'Liberation Sans',sans-serif;color:#000;white-space:nowrap;letter-spacing:0.25px;text-align:right">625,000.00</div>
<div style="left:1089px;top:407px;width:96px;height:20px;font:bold 16px/20px 'Liberation Sans',sans-serif;color:#000;white-space:nowrap;letter-spacing:0.25px;text-align:right">625,000.00</div>
<div style="left:978px;top:434px;width:221px;height:1px;background:#b3c7cf"></div>
<div style="left:1088px;top:434px;width:1px;height:35px;background:#b3c7cf"></div>
<div style="left:978px;top:441px;width:96px;height:20px;font:bold 16px/20px 'Liberation Sans',sans-serif;color:#000;white-space:nowrap;letter-spacing:0.25px;text-align:right">0.00</div>
<div style="left:1089px;top:441px;width:96px;height:20px;font:bold 16px/20px 'Liberation Sans',sans-serif;color:#000;white-space:nowrap;letter-spacing:0.25px;text-align:right">0.00</div>
<div style="left:978px;top:468px;width:221px;height:1px;background:#b3c7cf"></div>
<div style="left:1088px;top:468px;width:1px;height:34px;background:#b3c7cf"></div>
<div style="left:978px;top:475px;width:96px;height:20px;font:bold 16px/20px 'Liberation Sans',sans-serif;color:#000;white-space:nowrap;letter-spacing:0.25px;text-align:right">161,643.84</div>
<div style="left:1089px;top:475px;width:96px;height:20px;font:bold 16px/20px 'Liberation Sans',sans-serif;color:#000;white-space:nowrap;letter-spacing:0.25px;text-align:right">161,643.84</div>
<div style="left:978px;top:501px;width:221px;height:1px;background:#b3c7cf"></div>
<div style="left:1088px;top:501px;width:1px;height:35px;background:#b3c7cf"></div>
<div style="left:978px;top:508px;width:96px;height:20px;font:bold 16px/20px 'Liberation Sans',sans-serif;color:#000;white-space:nowrap;letter-spacing:0.25px;text-align:right">0.00</div>
<div style="left:1089px;top:508px;width:96px;height:20px;font:bold 16px/20px 'Liberation Sans',sans-serif;color:#000;white-space:nowrap;letter-spacing:0.25px;text-align:right">0.00</div>
<div style="left:978px;top:535px;width:221px;height:1px;background:#b3c7cf"></div>
<div style="left:1088px;top:535px;width:1px;height:35px;background:#b3c7cf"></div>
<div style="left:978px;top:542px;width:96px;height:20px;font:bold 16px/20px 'Liberation Sans',sans-serif;color:#000;white-space:nowrap;letter-spacing:0.25px;text-align:right">0.00</div>
<div style="left:1089px;top:542px;width:96px;height:20px;font:bold 16px/20px 'Liberation Sans',sans-serif;color:#000;white-space:nowrap;letter-spacing:0.25px;text-align:right">0.00</div>
<div style="left:978px;top:569px;width:221px;height:1px;background:#b3c7cf"></div>
<div style="left:1088px;top:569px;width:1px;height:35px;background:#b3c7cf"></div>
<div style="left:978px;top:576px;width:96px;height:20px;font:bold 16px/20px 'Liberation Sans',sans-serif;color:#000;white-space:nowrap;letter-spacing:0.25px;text-align:right">0.00</div>
<div style="left:1089px;top:576px;width:96px;height:20px;font:bold 16px/20px 'Liberation Sans',sans-serif;color:#000;white-space:nowrap;letter-spacing:0.25px;text-align:right">0.00</div>
<div style="left:978px;top:603px;width:221px;height:1px;background:#b3c7cf"></div>
<div style="left:1088px;top:603px;width:1px;height:34px;background:#b3c7cf"></div>
<div style="left:978px;top:610px;width:96px;height:20px;font:bold 16px/20px 'Liberation Sans',sans-serif;color:#000;white-space:nowrap;letter-spacing:0.25px;text-align:right">0.00</div>
<div style="left:1089px;top:610px;width:96px;height:20px;font:bold 16px/20px 'Liberation Sans',sans-serif;color:#000;white-space:nowrap;letter-spacing:0.25px;text-align:right">0.00</div>
<div style="left:978px;top:636px;width:221px;height:1px;background:#b3c7cf"></div>
<div style="left:1088px;top:636px;width:1px;height:35px;background:#b3c7cf"></div>
<div style="left:978px;top:643px;width:96px;height:20px;font:bold 16px/20px 'Liberation Sans',sans-serif;color:#000;white-space:nowrap;letter-spacing:0.25px;text-align:right">0.00</div>
<div style="left:1089px;top:643px;width:96px;height:20px;font:bold 16px/20px 'Liberation Sans',sans-serif;color:#000;white-space:nowrap;letter-spacing:0.25px;text-align:right">0.00</div>
<div style="left:978px;top:670px;width:221px;height:1px;background:#b3c7cf"></div>
<div style="left:1088px;top:670px;width:1px;height:35px;background:#b3c7cf"></div>
<div style="left:978px;top:677px;width:96px;height:20px;font:bold 16px/20px 'Liberation Sans',sans-serif;color:#000;white-space:nowrap;letter-spacing:0.25px;text-align:right">0.00</div>
<div style="left:1089px;top:677px;width:96px;height:20px;font:bold 16px/20px 'Liberation Sans',sans-serif;color:#000;white-space:nowrap;letter-spacing:0.25px;text-align:right">0.00</div>
<div style="left:978px;top:704px;width:221px;height:1px;background:#b3c7cf"></div>
<div style="left:978px;top:711px;width:96px;height:20px;font:bold 16px/20px 'Liberation Sans',sans-serif;color:#000;white-space:nowrap;letter-spacing:0.25px;text-align:right">0.00</div>
<div style="left:1089px;top:711px;width:96px;height:20px;font:bold 16px/20px 'Liberation Sans',sans-serif;color:#000;white-space:nowrap;letter-spacing:0.25px;text-align:right">0.00</div>
<div style="left:978px;top:738px;width:221px;height:1px;background:#b3c7cf"></div>
<div style="left:978px;top:745px;width:221px;height:20px;font:bold 16px/20px 'Liberation Sans',sans-serif;color:#000;white-space:nowrap;letter-spacing:0.25px;text-align:center">0</div>
<div style="left:978px;top:771px;width:221px;height:1px;background:#b3c7cf"></div>
<div style="left:978px;top:805px;width:221px;height:1px;background:#b3c7cf"></div>
</div></body></html>
